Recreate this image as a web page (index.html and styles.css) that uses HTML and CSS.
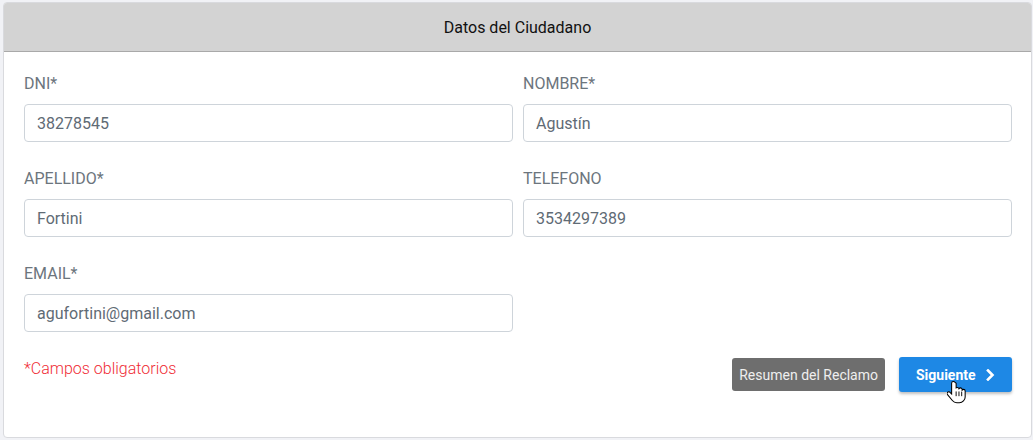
FILE: index.html
```html
<!DOCTYPE html>
<html lang="es">
<head>
<meta charset="utf-8">
<title>Datos del Ciudadano</title>
<link rel="stylesheet" href="styles.css">
</head>
<body>
<div class="card">
  <div class="card-header">Datos del Ciudadano</div>
  <div class="card-body">
    <div class="grid">
      <div class="field">
        <label class="label">DNI*</label>
        <div class="input">38278545</div>
      </div>
      <div class="field">
        <label class="label">NOMBRE*</label>
        <div class="input">Agustín</div>
      </div>
      <div class="field">
        <label class="label">APELLIDO*</label>
        <div class="input">Fortini</div>
      </div>
      <div class="field">
        <label class="label">TELEFONO</label>
        <div class="input">3534297389</div>
      </div>
      <div class="field">
        <label class="label">EMAIL*</label>
        <div class="input">agufortini@gmail.com</div>
      </div>
    </div>
    <div class="footer">
      <div class="required">*Campos obligatorios</div>
      <div class="actions">
        <button class="btn btn-gray">Resumen del Reclamo</button>
        <button class="btn btn-blue">Siguiente
          <svg class="chev" width="9" height="12" viewBox="0 0 9 12"><path d="M2 1.5 L6.5 6 L2 10.5" fill="none" stroke="#fff" stroke-width="2.6" stroke-linecap="square"/></svg>
          <svg class="cursor" width="21" height="29" viewBox="0 0 20 24"><path d="M6 1.5c-.9 0-1.6.7-1.6 1.6v10.3l-1.5-1.6c-.7-.7-1.8-.7-2.4 0-.6.6-.6 1.5 0 2.2l4.6 5.6c1 1.3 2.6 2.1 4.3 2.1h2.4c3 0 5.5-2.5 5.5-5.5V10.6c0-.9-.7-1.6-1.6-1.6-.6 0-1 .3-1.3.7v-.5c0-.9-.7-1.6-1.6-1.6-.6 0-1.1.3-1.4.8-.2-.7-.9-1.2-1.6-1.2-.4 0-.8.2-1.1.4V3.1C7.6 2.2 6.9 1.5 6 1.5z" fill="#fff" stroke="#000" stroke-width="1"/><path d="M8.7 11v4.5M11.4 11v4.5M14 11.3v4.2" stroke="#000" stroke-width="0.9"/></svg>
        </button>
      </div>
    </div>
  </div>
</div>
</body>
</html>
```
FILE: styles.css
```css
* { box-sizing: border-box; }
html, body { margin: 0; padding: 0; }
body {
  background: #f1f2f6;
  font-family: Roboto, "Liberation Sans", Arial, sans-serif;
  padding: 2px 2px 0 3px;
}
.card {
  background: #fff;
  border: 1px solid #d9dade;
  border-radius: 4px;
  width: 1029px;
  height: 436px;
  overflow: hidden;
}
.card-header {
  background: #d3d3d3;
  border-bottom: 1px solid #a9a9a9;
  height: 49px;
  display: flex;
  align-items: center;
  justify-content: center;
  font-size: 16px;
  font-weight: 400;
  color: #111;
}
.card-body {
  padding: 20px 19px 0 20px;
}
.grid {
  display: grid;
  grid-template-columns: 489px 489px;
  column-gap: 10px;
  row-gap: 25px;
}
.field { display: flex; flex-direction: column; }
.label {
  font-size: 16px;
  line-height: 24px;
  color: #6c757d;
  margin-bottom: 8px;
}
.input {
  height: 38px;
  border: 1px solid #ced4da;
  border-radius: 4px;
  padding: 0 12px;
  display: flex;
  align-items: center;
  font-size: 16px;
  color: #5f6b75;
}
.footer {
  margin-top: 25px;
  display: flex;
  justify-content: space-between;
  align-items: flex-start;
}
.required {
  color: #f02d36;
  font-size: 16px;
  font-weight: 300;
  line-height: 24px;
}
.actions {
  display: flex;
  align-items: flex-start;
  gap: 14px;
}
.btn {
  font-family: Roboto, "Liberation Sans", Arial, sans-serif;
  border: none;
  border-radius: 3px;
  font-size: 14px;
  color: #fff;
  cursor: pointer;
  display: flex;
  align-items: center;
}
.btn-gray {
  background: #6e6e6e;
  color: #eee;
  height: 33px;
  padding: 0 7px;
  margin-top: 1px;
}
.btn-blue {
  background: #1e88e5;
  height: 35px;
  width: 113px;
  padding: 0 0 0 17px;
  font-weight: 700;
  box-shadow: 0 2px 3px rgba(0,0,0,0.25);
  position: relative;
}
.chev { margin-left: 10px; }
.cursor {
  position: absolute;
  left: 48px;
  top: 21px;
}
```
